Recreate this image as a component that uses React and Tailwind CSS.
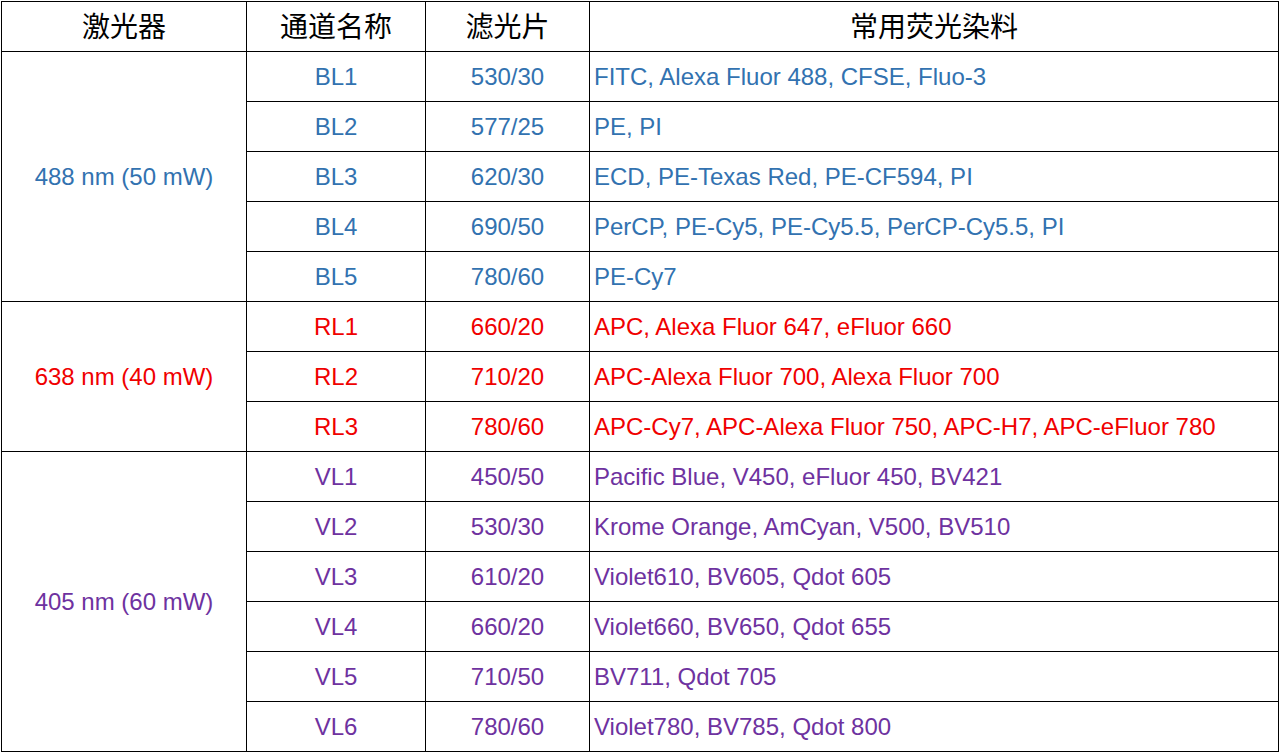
const blue = 'text-[#3272b0]';
const red = 'text-[#f00000]';
const purple = 'text-[#6e32a0]';

const groups = [
  {
    laser: '488 nm (50 mW)',
    color: blue,
    rows: [
      ['BL1', '530/30', 'FITC, Alexa Fluor 488, CFSE, Fluo-3'],
      ['BL2', '577/25', 'PE, PI'],
      ['BL3', '620/30', 'ECD, PE-Texas Red, PE-CF594, PI'],
      ['BL4', '690/50', 'PerCP, PE-Cy5, PE-Cy5.5, PerCP-Cy5.5, PI'],
      ['BL5', '780/60', 'PE-Cy7'],
    ],
  },
  {
    laser: '638 nm (40 mW)',
    color: red,
    rows: [
      ['RL1', '660/20', 'APC, Alexa Fluor 647, eFluor 660'],
      ['RL2', '710/20', 'APC-Alexa Fluor 700, Alexa Fluor 700'],
      ['RL3', '780/60', 'APC-Cy7, APC-Alexa Fluor 750, APC-H7, APC-eFluor 780'],
    ],
  },
  {
    laser: '405 nm (60 mW)',
    color: purple,
    rows: [
      ['VL1', '450/50', 'Pacific Blue, V450, eFluor 450, BV421'],
      ['VL2', '530/30', 'Krome Orange, AmCyan, V500, BV510'],
      ['VL3', '610/20', 'Violet610, BV605, Qdot 605'],
      ['VL4', '660/20', 'Violet660, BV650, Qdot 655'],
      ['VL5', '710/50', 'BV711, Qdot 705'],
      ['VL6', '780/60', 'Violet780, BV785, Qdot 800'],
    ],
  },
];

const rowSpan = { 3: 'row-span-3', 5: 'row-span-5', 6: 'row-span-6' };

export default function App() {
  return (
    <div className="min-h-screen bg-white pt-px pl-px">
      <div
        className="grid w-[1278px] grid-cols-[245px_179px_164px_689px] auto-rows-[50px] border-l border-t border-black text-[24px] leading-none"
        style={{ fontFamily: '"Liberation Sans", "Noto Sans CJK SC", Arial, sans-serif' }}
      >
        {['激光器', '通道名称', '滤光片', '常用荧光染料'].map((h) => (
          <div key={h} className="flex items-center justify-center border-r border-b border-black pt-[3px] text-[28px] text-black">
            {h}
          </div>
        ))}
        {groups.map((g) => (
          <Group key={g.laser} g={g} />
        ))}
      </div>
    </div>
  );
}

function Group({ g }) {
  return (
    <>
      <div
        className={`${rowSpan[g.rows.length]} flex items-center justify-center border-r border-b border-black ${g.color}`}
        style={{ gridColumn: 1 }}
      >
        {g.laser}
      </div>
      {g.rows.map(([ch, filter, dyes]) => (
        <Row key={ch} ch={ch} filter={filter} dyes={dyes} color={g.color} />
      ))}
    </>
  );
}

function Row({ ch, filter, dyes, color }) {
  return (
    <>
      <div className={`col-start-2 flex items-center justify-center border-r border-b border-black ${color}`}>{ch}</div>
      <div className={`flex items-center justify-center border-r border-b border-black ${color}`}>{filter}</div>
      <div className={`flex items-center border-r border-b border-black pl-[4px] ${color}`}>{dyes}</div>
    </>
  );
}
